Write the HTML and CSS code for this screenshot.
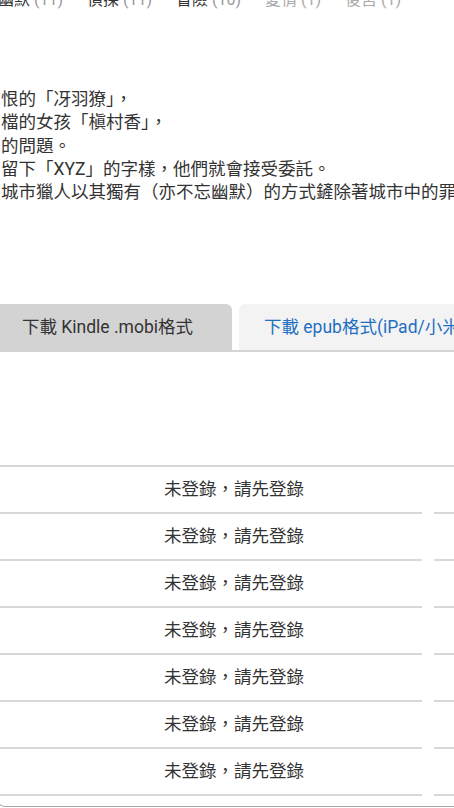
FILE: index.html
```html
<!DOCTYPE html>
<html lang="zh-Hant">
<head>
    <meta charset="UTF-8">
    <meta name="viewport" content="width=device-width, initial-scale=1.0">
    <title>城市獵人</title>
    <link rel="stylesheet" href="styles.css">
</head>
<body>
    <div class="page">
        <div class="tags">
            <a class="tag">幽默 <span class="count">(11)</span></a>
            <a class="tag">偵探 <span class="count">(11)</span></a>
            <a class="tag">冒險 <span class="count">(10)</span></a>
            <a class="tag tag-minor">愛情 <span class="count">(1)</span></a>
            <a class="tag tag-minor">後宮 <span class="count">(1)</span></a>
        </div>

        <p class="intro">
            恨的「冴羽獠」，<br>
            檔的女孩「槇村香」，<br>
            的問題。<br>
            留下「XYZ」的字樣，他們就會接受委託。<br>
            城市獵人以其獨有（亦不忘幽默）的方式鏟除著城市中的罪惡與黑暗。
        </p>

        <div class="tabs">
            <a class="tab tab-active">下載 Kindle .mobi格式</a>
            <a class="tab">下載 epub格式(iPad/小米多看/Kobo等)</a>
        </div>

        <div class="chapters">
            <div class="chapter-list">
                <div class="chapter-row"><span class="cell-main">未登錄，請先登錄</span><span class="cell-side"></span></div>
                <div class="chapter-row"><span class="cell-main">未登錄，請先登錄</span><span class="cell-side"></span></div>
                <div class="chapter-row"><span class="cell-main">未登錄，請先登錄</span><span class="cell-side"></span></div>
                <div class="chapter-row"><span class="cell-main">未登錄，請先登錄</span><span class="cell-side"></span></div>
                <div class="chapter-row"><span class="cell-main">未登錄，請先登錄</span><span class="cell-side"></span></div>
                <div class="chapter-row"><span class="cell-main">未登錄，請先登錄</span><span class="cell-side"></span></div>
                <div class="chapter-row"><span class="cell-main">未登錄，請先登錄</span><span class="cell-side"></span></div>
            </div>
        </div>
    </div>
</body>
</html>
```

FILE: styles.css
```css
html, body {
    margin: 0;
    overflow: hidden;
}

body {
    font-family: Roboto, "Noto Sans CJK TC", sans-serif;
    font-size: 17.5px;
    color: #333;
    background: #fff;
}

/* the page is wider than the window, so it runs off both sides */
.page {
    width: 1000px;
    margin: -12px 0 0 -24px;
}

/* tag list */
.tags {
    display: flex;
    gap: 24px;
    padding-left: 22px;
    font-size: 16px;
    line-height: 24px;
    white-space: nowrap;
}
.tag {
    color: #333;
}
.tag .count {
    color: #999;
}
.tag-minor,
.tag-minor .count {
    color: #aaa;
}

/* description */
.intro {
    margin: 76px 0 0;
    padding-left: 25px;
    line-height: 23.3px;
    white-space: nowrap;
}

/* download tabs */
.tabs {
    display: flex;
    gap: 7px;
    margin-top: 100px;
    border-bottom: 2px solid #d4d4d4;
}
.tab {
    box-sizing: border-box;
    height: 46px;
    line-height: 46px;
    padding: 0 25px;
    background: #f3f3f3;
    color: #1f6fc1;
    border-radius: 6px 6px 0 0;
    white-space: nowrap;
}
.tab-active {
    width: 256px;
    padding-left: 46px;
    background: #d3d3d3;
    color: #333;
}

/* chapter table */
.chapters {
    margin: 113px 0 0 21px;
    padding: 0 0 10px 2px;
    border: 1px solid #a8a8a8;
    border-top: 0;
    border-radius: 0 0 8px 8px;
}
.chapter-list {
    border-top: 2px solid #d8d8d8;
}
.chapter-row {
    display: flex;
    gap: 12px;
}
.cell-main {
    box-sizing: border-box;
    width: 422px;
    height: 47px;
    line-height: 45px;
    padding-left: 46px;
    text-align: center;
    border-bottom: 2px solid #d8d8d8;
}
.cell-side {
    flex: 1;
    border-bottom: 2px solid #d8d8d8;
}
```
